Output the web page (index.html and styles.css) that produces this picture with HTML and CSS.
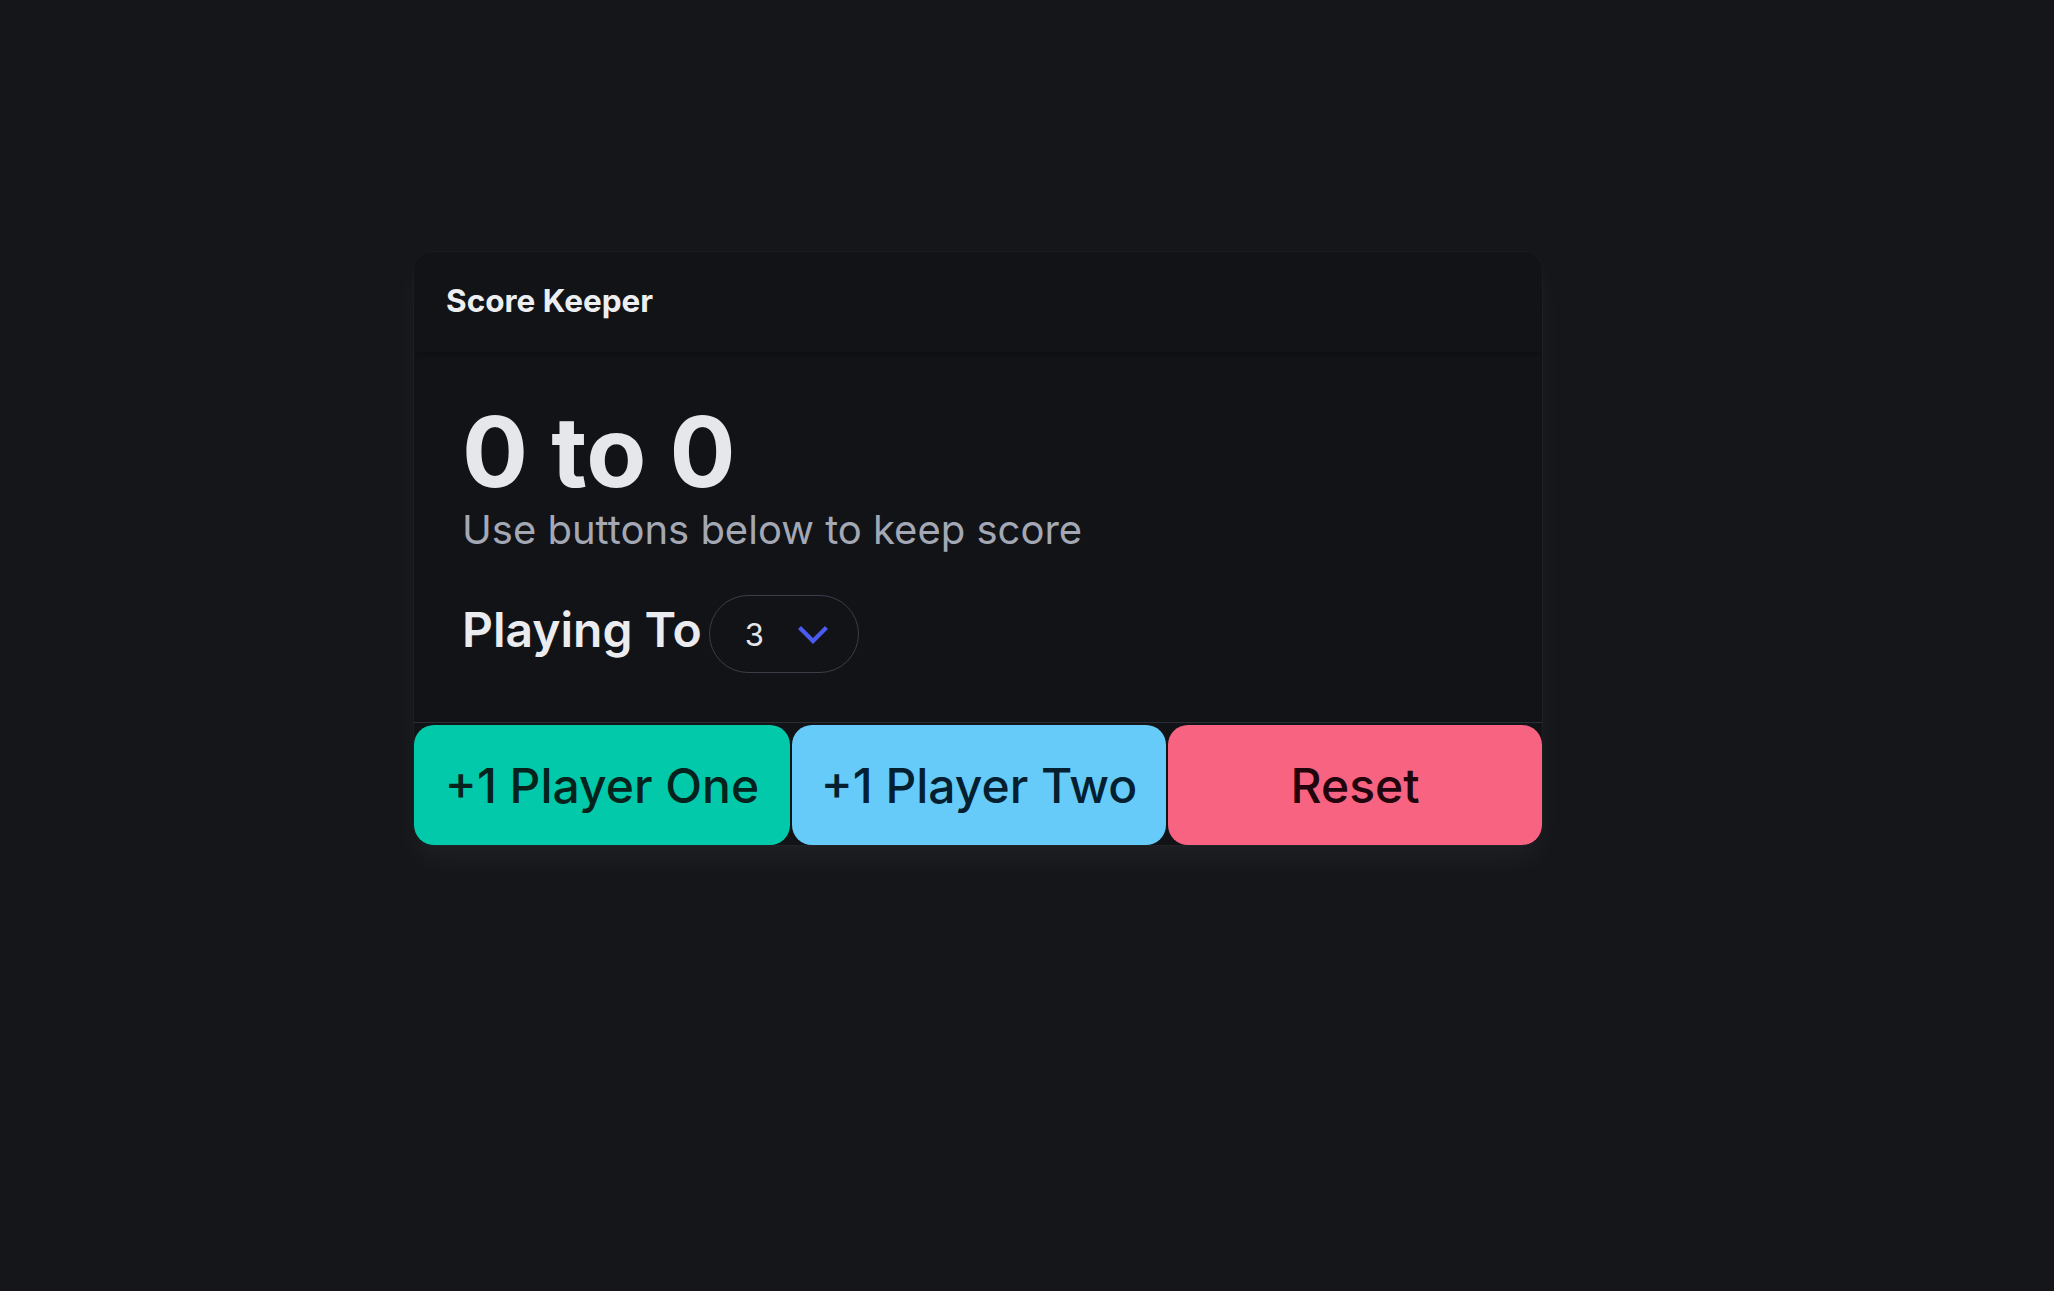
FILE: index.html
```html
<!DOCTYPE html>
<html lang="en">
<head>
<meta charset="utf-8">
<title>Score Keeper</title>
<link rel="stylesheet" href="styles.css">
</head>
<body>
<div class="page">
  <div class="card">
    <header class="card-header">
      <p class="card-title">Score Keeper</p>
    </header>
    <div class="card-content">
      <h1 class="score">0 to 0</h1>
      <p class="subtitle">Use buttons below to keep score</p>
      <div class="playing">
        <span class="playing-label">Playing To</span>
        <div class="select">
          <span class="select-value">3</span>
          <svg class="chevron" width="30" height="18" viewBox="0 0 30 18"><path d="M3 3 L15 15 L27 3" fill="none" stroke="#4a5cf0" stroke-width="4.2" stroke-linecap="square"/></svg>
        </div>
      </div>
    </div>
    <footer class="card-footer">
      <button class="btn btn-one">+1 Player One</button>
      <button class="btn btn-two">+1 Player Two</button>
      <button class="btn btn-reset">Reset</button>
    </footer>
  </div>
</div>
</body>
</html>
```

FILE: styles.css
```css
html, body {
  margin: 0;
  padding: 0;
  background: #14161a;
}
body {
  font-family: Inter, "Noto Sans", sans-serif;
  min-height: 1291px;
}
.page {
  padding: 252px 0 0 414px;
}
.card {
  width: 1128px;
  background: #111317;
  border-radius: 18px;
  box-shadow: 0 16px 32px -4px rgba(255, 255, 255, 0.05), 0 0 0 1px rgba(255, 255, 255, 0.025);
  overflow: hidden;
}
.card-header {
  box-sizing: border-box;
  height: 100px;
  display: flex;
  align-items: center;
  padding: 0 32px 3px;
  box-shadow: 0 2px 4px rgba(0, 0, 0, 0.25);
}
.card-title {
  margin: 0;
  font-weight: 700;
  font-size: 31.5px;
  color: #eceef1;
}
.card-content {
  padding: 46px 48px 49px;
}
.score {
  margin: 0;
  font-weight: 700;
  font-size: 98px;
  line-height: 108px;
  color: #e6e7eb;
}
.subtitle {
  margin: -1px 0 0;
  font-weight: 400;
  font-size: 40px;
  line-height: 50px;
  color: #a3a8b4;
}
.playing {
  display: flex;
  align-items: center;
  gap: 7px;
  margin-top: 40px;
}
.playing-label {
  font-weight: 600;
  font-size: 48px;
  line-height: 54px;
  color: #ebecef;
  margin-bottom: 8px;
}
.select {
  box-sizing: border-box;
  width: 150px;
  height: 78px;
  border: 1.5px solid #3a3e48;
  border-radius: 40px;
  display: flex;
  align-items: center;
  padding: 0 30px 0 35px;
}
.select-value {
  font-size: 31px;
  color: #e3e5e9;
}
.chevron {
  margin-left: auto;
  margin-top: 2px;
}
.card-footer {
  border-top: 1px solid #2b2e36;
  padding-top: 2px;
  display: grid;
  grid-template-columns: 376px 374px 374px;
  gap: 2px;
}
.btn {
  height: 120px;
  border: none;
  border-radius: 20px;
  font-family: Inter, "Noto Sans", sans-serif;
  font-size: 48px;
  font-weight: 500;
  padding: 0;
  cursor: pointer;
}
.btn-one {
  background: #02c9a9;
  color: #05221d;
}
.btn-two {
  background: #66cbf8;
  color: #041f30;
}
.btn-reset {
  background: #f76380;
  color: #22040c;
}
```
